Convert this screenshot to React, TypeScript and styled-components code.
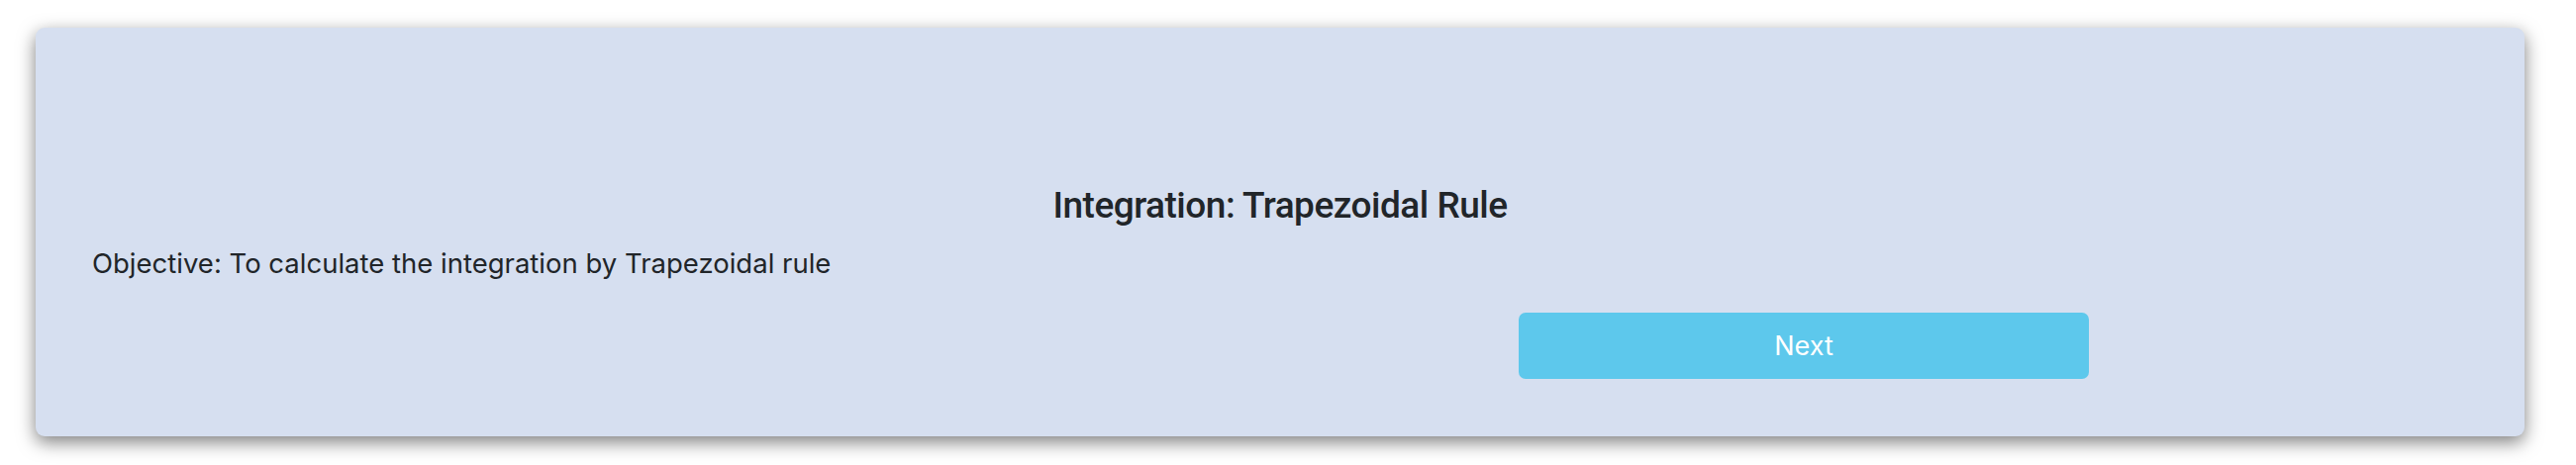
import React from "react";
import styled, { createGlobalStyle } from "styled-components";

const Global = createGlobalStyle`
  html, body { margin: 0; padding: 0; background: #ffffff; }
  body { font-family: Inter, "Noto Sans", "Liberation Sans", sans-serif; color: #212529; }
`;

const Page = styled.div`
  padding: 28px 52px 29px 36px;
`;

const Card = styled.section`
  background: #d6dff0;
  border-radius: 9px;
  box-shadow: 0 6px 18px rgba(0, 0, 0, 0.5);
  padding: 156px 57px 58px 57px;
  display: flex;
  flex-direction: column;
`;

const Title = styled.h4`
  margin: 0;
  font-family: Roboto, Inter, sans-serif;
  font-size: 37px;
  letter-spacing: -0.5px;
  line-height: 48px;
  font-weight: 500;
  text-align: center;
  color: #212529;
`;

const Objective = styled.p`
  margin: 14px 0 0 0;
  font-size: 27.5px;
  line-height: 40px;
  color: #212529;
`;

const ActionRow = styled.div`
  margin-top: 30px;
  display: grid;
  grid-template-columns: 1441px 576px;
`;

const NextButton = styled.button`
  grid-column: 2;
  height: 67px;
  border: none;
  border-radius: 7px;
  background: #5dc8ec;
  color: #ffffff;
  font-family: inherit;
  font-size: 27px;
  cursor: pointer;
`;

export default function App() {
  return (
    <>
      <Global />
      <Page>
        <Card>
          <Title>Integration: Trapezoidal Rule</Title>
          <Objective>Objective: To calculate the integration by Trapezoidal rule</Objective>
          <ActionRow>
            <NextButton>Next</NextButton>
          </ActionRow>
        </Card>
      </Page>
    </>
  );
}
